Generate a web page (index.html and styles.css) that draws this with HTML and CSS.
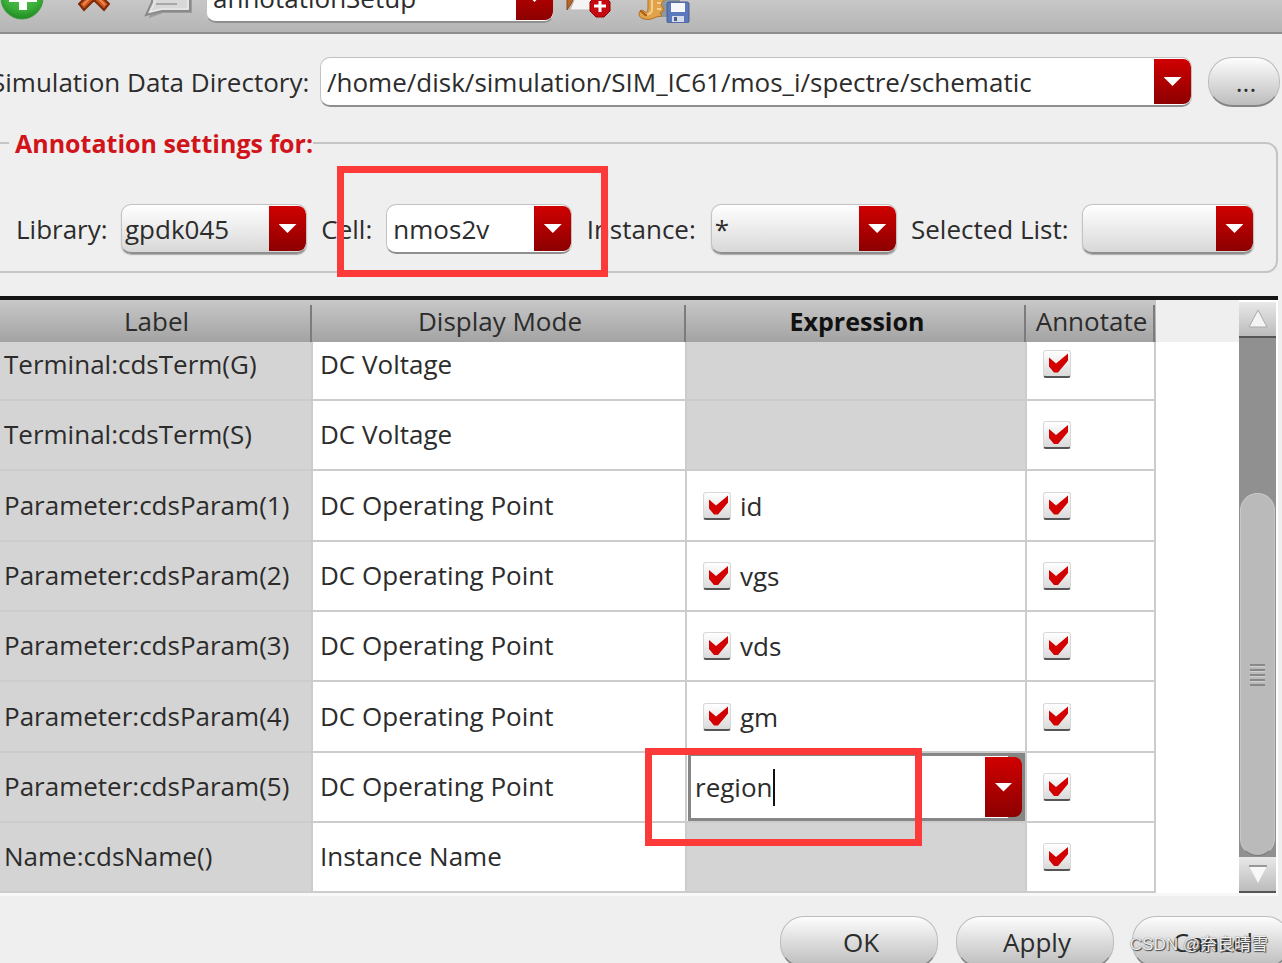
FILE: index.html
```html
<!DOCTYPE html>
<html lang="en">
<head>
<meta charset="utf-8">
<title>Annotation Setup</title>
<link rel="stylesheet" href="styles.css">
</head>
<body>
<header class="toolbar">
  <div class="tools">
    <button class="tool" aria-label="Add"><svg width="44" height="50" viewBox="0 0 44 50">
      <defs><radialGradient id="green" cx=".5" cy=".3" r=".7"><stop offset="0" stop-color="#5ccc58"/><stop offset=".7" stop-color="#3aae38"/><stop offset="1" stop-color="#1f8a22"/></radialGradient></defs>
      <circle cx="22" cy="25" r="21" fill="url(#green)" stroke="#3f9a3f" stroke-width="1"/>
      <path d="M19 11h8v10h10v8H27v8h-8v-8H9v-8h10z" fill="#fff"/></svg></button>
    <button class="tool" aria-label="Delete"><svg width="32" height="50" viewBox="0 0 32 50">
      <path d="M1 8l5-5 10 12L26 3l5 5-10 13 10 10-5 6-10-10-10 10-5-6 10-10z" fill="#c9531b" stroke="#7c2b08" stroke-width="2"/>
      <path d="M5 32l11-11 11 11" fill="none" stroke="#ef8b52" stroke-width="2"/></svg></button>
    <button class="tool" aria-label="Comment"><svg width="50" height="50" viewBox="0 0 50 50">
      <path d="M8 4h40v36H19L5 45l4-12z" fill="#777" opacity=".5"/>
      <path d="M8 2h38v36H18L2 42l6-13z" fill="#d8d8d8" stroke="#8a8a8a" stroke-width="2"/>
      <path d="M11 4h33v32H17L6 39l5-10z" fill="none" stroke="#f1f1f1" stroke-width="1"/>
      <path d="M12 26h24M12 31h21" stroke="#a8a8a8" stroke-width="2"/></svg></button>
  </div>
  <div class="combo setup"><input class="edit" value="annotationSetup" aria-label="Setup name"><button class="drop" aria-label="Show setups"></button></div>
  <div class="tools files">
    <button class="tool" aria-label="New from folder"><svg width="46" height="50" viewBox="0 0 46 50">
      <path d="M1 37V10h6v18z" fill="#b4652a" stroke="#8c4a1b"/>
      <path d="M4 37l7-17h30l-7 17z" fill="#f4f4f4" stroke="#bbb"/>
      <path d="M30 23h8l6 6v9l-6 6h-8l-6-6v-9z" fill="#c60812" stroke="#8f0000"/>
      <path d="M34 28v11M28 33h12" stroke="#fff" stroke-width="3"/></svg></button>
    <button class="tool" aria-label="Save script"><svg width="54" height="50" viewBox="0 0 54 50">
      <path d="M26 18l16 8v18H22z" fill="#8e989c"/>
      <path d="M10 14h16l-3 7 4 5-4 5 3 6-4 3 2 3-6 1c-6 4-17 3-17-3 0-4 4-5 6-2 3 2 3-3 3-7z" fill="#e0a24a" stroke="#b66f21" stroke-width="1"/>
      <path d="M14 18v18q0 5-6 6M19 30h4M19 36h4" fill="none" stroke="#f6cf8a" stroke-width="2"/>
      <path d="M2 38c4 0 3 5 7 4" fill="none" stroke="#a85c13" stroke-width="2"/>
      <rect x="29" y="29" width="22" height="21" rx="2" fill="#5c78bd" stroke="#4c5c90"/>
      <path d="M33 30h14v9H33z" fill="#f5f7fb"/><path d="M34 43h12v6H34z" fill="#d5dbe8"/><path d="M36 44h3v4h-3z" fill="#4c5c90"/></svg></button>
  </div>
</header>

<main class="content">
  <div class="directory">
    <label for="dir">Simulation Data Directory:</label>
    <div class="combo"><input class="edit" id="dir" value="/home/disk/simulation/SIM_IC61/mos_i/spectre/schematic"><button class="drop" aria-label="Show directories"></button></div>
    <button class="push browse">...</button>
  </div>

  <fieldset class="settings">
    <legend>Annotation settings for:</legend>
    <div class="fields">
      <div class="field library"><label for="lib">Library:</label><div class="combo gray"><select id="lib"><option>gpdk045</option></select><span class="drop"></span></div></div>
      <div class="field cell"><label for="cell">Cell:</label><div class="combo"><input class="edit" id="cell" value="nmos2v"><button class="drop" aria-label="Show cells"></button></div><span class="mark"></span></div>
      <div class="field instance"><label for="inst">Instance:</label><div class="combo gray"><select id="inst"><option>*</option></select><span class="drop"></span></div></div>
      <div class="field selected"><label for="sel">Selected List:</label><div class="combo gray"><select id="sel"><option></option></select><span class="drop"></span></div></div>
    </div>
  </fieldset>

  <section class="panel">
    <div class="sheet">
      <table>
        <colgroup><col class="c1"><col class="c2"><col class="c3"><col class="c4"></colgroup>
        <thead><tr><th>Label</th><th>Display Mode</th><th class="strong">Expression</th><th>Annotate</th></tr></thead>
        <tbody>
          <tr><td>Terminal:cdsTerm(G)</td><td>DC Voltage</td><td class="off"></td><td><input type="checkbox" aria-label="Annotate G" checked></td></tr>
          <tr><td>Terminal:cdsTerm(S)</td><td>DC Voltage</td><td class="off"></td><td><input type="checkbox" aria-label="Annotate S" checked></td></tr>
          <tr><td>Parameter:cdsParam(1)</td><td>DC Operating Point</td><td><label class="check"><input type="checkbox" checked>id</label></td><td><input type="checkbox" aria-label="Annotate 1" checked></td></tr>
          <tr><td>Parameter:cdsParam(2)</td><td>DC Operating Point</td><td><label class="check"><input type="checkbox" checked>vgs</label></td><td><input type="checkbox" aria-label="Annotate 2" checked></td></tr>
          <tr><td>Parameter:cdsParam(3)</td><td>DC Operating Point</td><td><label class="check"><input type="checkbox" checked>vds</label></td><td><input type="checkbox" aria-label="Annotate 3" checked></td></tr>
          <tr><td>Parameter:cdsParam(4)</td><td>DC Operating Point</td><td><label class="check"><input type="checkbox" checked>gm</label></td><td><input type="checkbox" aria-label="Annotate 4" checked></td></tr>
          <tr><td>Parameter:cdsParam(5)</td><td>DC Operating Point</td><td class="editing"><div class="editor"><input class="edit" value="region" aria-label="Expression"><span class="caret"></span><button class="drop" aria-label="Show expressions"></button><span class="mark"></span></div></td><td><input type="checkbox" aria-label="Annotate 5" checked></td></tr>
          <tr><td>Name:cdsName()</td><td>Instance Name</td><td class="off"></td><td><input type="checkbox" aria-label="Annotate name" checked></td></tr>
        </tbody>
      </table>
    </div>
    <div class="scroll">
      <button class="step" aria-label="Scroll up"><svg width="24" height="22" viewBox="0 0 24 22"><path d="M12 2l9 17H3z" fill="#f4f4f4" stroke="#aaa"/></svg></button>
      <div class="track"><div class="thumb"><span class="grip"></span></div></div>
      <button class="step" aria-label="Scroll down"><svg width="24" height="22" viewBox="0 0 24 22"><path d="M3 3h18l-9 17z" fill="#f8f8f8"/><path d="M3 3h18" stroke="#999" stroke-width="2"/></svg></button>
    </div>
  </section>

  <footer class="actions">
    <button class="push">OK</button><button class="push">Apply</button><button class="push">Cancel</button>
  </footer>
</main>
<div class="watermark">CSDN @奈良晴雪</div>
</body>
</html>
```

FILE: styles.css
```css
* { box-sizing: border-box; }

body {
  margin: 0;
  height: 100vh;
  overflow: hidden;
  position: relative;
  background: #efefef;
  color: #2c2c2c;
  font: 26px/34px "Open Sans", "Noto Sans", sans-serif;
}

button, input, select { font: inherit; color: inherit; margin: 0; }
button { cursor: pointer; }

/* Toolbar */
.toolbar {
  display: flex;
  align-items: center;
  gap: 12px;
  height: 64px;
  margin-top: -30px;
  padding: 4px 0 10px;
  background: linear-gradient(#d8d8d8, #b5b5b5);
  border-bottom: 2px solid #8c8c8c;
}
.tools { display: flex; gap: 34px; }
.files { gap: 26px; }
.tool { padding: 0; border: 0; background: none; }
.tool svg { display: block; }
.setup { width: 348px; }

/* Combo boxes */
.combo {
  display: flex;
  height: 50px;
  padding: 1px 0;
  border: 1px solid #c2c2c2;
  border-bottom: 2px solid #8f8f8f;
  border-radius: 10px;
  background: #fff;
  overflow: hidden;
}
.gray { background: linear-gradient(#fff, #d8d8d8); box-shadow: 0 1px 1px #aaa; }
.edit, .combo select {
  flex: 1;
  min-width: 0;
  padding: 0 0 0 6px;
  border: 0;
  outline: 0;
  background: none;
  appearance: none;
}
.combo select { padding-left: 3px; }
.drop {
  display: flex;
  flex: 0 0 37px;
  align-items: center;
  justify-content: center;
  padding: 0;
  border: 0;
  border-radius: 0 8px 8px 0;
  background: linear-gradient(#d00000, #8c0000);
}
.drop::before {
  content: "";
  width: 18px;
  height: 9px;
  background: #fff;
  clip-path: polygon(0 0, 100% 0, 50% 100%);
}

/* Push buttons */
.push {
  width: 158px;
  height: 52px;
  padding: 0 0 0 4px;
  border: 1px solid #bcbcbc;
  border-bottom: 2px solid #858585;
  border-radius: 24px;
  background: linear-gradient(#fdfdfd, #bdbdbd);
}
.browse { width: 72px; height: 50px; }

.content { padding-top: 23px; }
.directory {
  display: flex;
  align-items: center;
  margin: 0 2px 0 -9px;
}
.directory label { flex: 0 0 329px; white-space: nowrap; }
.directory .combo { flex: 1; margin-right: 16px; }

/* Settings group */
.settings {
  margin: 19px 4px 0 -12px;
  padding: 44px 22px 17px 26px;
  border: 2px solid #c4c4c4;
  border-radius: 12px;
}
.settings legend {
  margin-left: -7px;
  padding: 0 0 0 6px;
  color: #d0141a;
  font-size: 25px;
  font-weight: 700;
}
.fields { display: flex; justify-content: space-between; }
.field { display: flex; align-items: center; white-space: nowrap; }
.field .combo { width: 186px; }
.library label { width: 105px; }
.cell { position: relative; }
.cell label { width: 65px; }
.instance label { width: 124px; }
.selected label { width: 171px; }
.selected .combo { width: 172px; }

/* Highlight rectangles */
.mark {
  position: absolute;
  z-index: 2;
  border: 7px solid #fc3a3a;
  pointer-events: none;
}
.cell .mark { inset: -38px -36px -23px 16px; }
.editor .mark { left: -46px; top: -8px; width: 277px; height: 98px; }

/* Table */
.panel {
  display: flex;
  margin: 23px 4px 0 0;
  border-top: 4px solid #151515;
  border-bottom: 3px solid #f8f8f8;
  background: #fff;
}
.sheet { flex: 1; background: linear-gradient(#efefef, #efefef) 0 0 / 100% 42px no-repeat; }
table { border-spacing: 0; table-layout: fixed; width: 1156px; }
.c1 { width: 313px; }
.c2 { width: 374px; }
.c3 { width: 340px; }
.c4 { width: 129px; }
th {
  height: 42px;
  padding: 0;
  font-weight: 400;
  background: linear-gradient(#7c7c7c, #7c7c7c) right 1px bottom 0 / 2px 37px no-repeat, linear-gradient(#c8c8c8, #a3a3a3);
}
th.strong { font-size: 25px; font-weight: 700; color: #111; }
td {
  height: 70px;
  padding: 0 0 2px 7px;
  border-right: 2px solid #ccc;
  border-bottom: 2px solid #ccc;
  white-space: nowrap;
}
td:first-child { padding-left: 4px; background: #d4d4d4; }
td:nth-child(3), td:last-child { padding: 0 0 0 16px; }
td.off { background: #d4d4d4; }
tr:nth-child(3n) td { height: 71px; }
tbody tr:first-child td { height: 59px; padding-bottom: 14px; }

input[type="checkbox"] {
  appearance: none;
  flex: none;
  display: block;
  width: 28px;
  height: 28px;
  border: 1px solid #d8d8d8;
  border-bottom: 2px solid #555;
  border-radius: 3px;
  background: linear-gradient(#fff, #dadada);
}
input[type="checkbox"]:checked::before {
  content: "";
  display: block;
  height: 25px;
  background: #d20000;
  clip-path: polygon(5px 7px, 12px 13px, 24px 3px, 24px 10px, 14px 22px, 10px 22px, 5px 16px);
}
.check { display: flex; align-items: center; gap: 9px; }

td.editing:nth-child(3) { padding: 0; }
.editor {
  position: relative;
  display: flex;
  height: 68px;
  margin-left: 1px;
  padding: 1px 0;
  border: 3px solid #868686;
  background: linear-gradient(to left, #868686 14px, #fff 14px);
}
.editor .edit { padding-left: 4px; }
.caret { position: absolute; left: 82px; top: 13px; width: 2px; height: 37px; background: #111; }

/* Scroll bar */
.scroll {
  display: flex;
  flex-direction: column;
  width: 39px;
  padding: 2px 2px 0 0;
}
.step {
  display: flex;
  flex: 0 0 36px;
  align-items: center;
  justify-content: center;
  padding: 0;
  border: 0;
  border-bottom: 2px solid #555;
  background: linear-gradient(#e8e8e8, #bcbcbc);
}
.track {
  display: flex;
  flex: 1;
  align-items: flex-end;
  padding: 0 1px 1px;
  background: #909090;
}
.thumb {
  display: flex;
  flex: 1;
  align-items: center;
  justify-content: center;
  height: 70%;
  border: 1px solid #c8c8c8;
  border-bottom-color: #777;
  border-radius: 18px;
  background: #bababa;
}
.grip {
  width: 15px;
  height: 22px;
  background: repeating-linear-gradient(#888 0 2px, #d0d0d0 2px 3px, #bababa 3px 5px);
}

.actions {
  display: flex;
  justify-content: flex-end;
  gap: 18px;
  margin: 20px -8px 0 0;
}
.actions .push { flex: none; }

.watermark {
  position: absolute;
  right: 14px;
  bottom: 6px;
  color: #eee;
  font: 17px/24px "Liberation Sans", "Noto Sans CJK SC", sans-serif;
  text-shadow: 1px 1px 1px #444, 0 0 1px #666;
}
```
